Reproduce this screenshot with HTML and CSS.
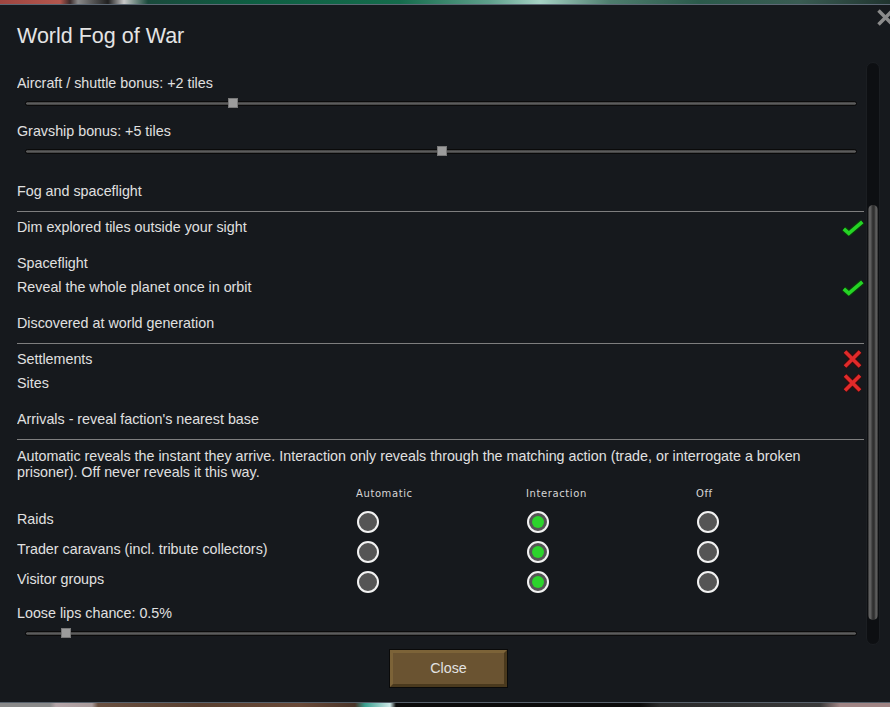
FILE: index.html
```html
<!DOCTYPE html>
<html lang="en">
<head>
<meta charset="utf-8">
<title>World Fog of War</title>
<link rel="stylesheet" href="styles.css">
</head>
<body>
<div class="bg-top"></div>
<div class="window">
  <svg class="close-x" width="19" height="19" viewBox="0 0 19 19"><path d="M2.5 2.5 L16.5 16.5 M16.5 2.5 L2.5 16.5" stroke="#8b8b8b" stroke-width="3.5" fill="none"/></svg>
  <h1 class="title">World Fog of War</h1>
  <div class="main">
    <div class="content">
      <div class="label">Aircraft / shuttle bonus: +2 tiles</div>
      <div class="slider"><div class="track"><div class="thumb" style="left:24.3%"></div></div></div>
      <div class="label">Gravship bonus: +5 tiles</div>
      <div class="slider"><div class="track"><div class="thumb" style="left:49.5%"></div></div></div>

      <div class="label section">Fog and spaceflight</div>
      <div class="sep"></div>
      <div class="row"><span>Dim explored tiles outside your sight</span>
        <svg class="check" width="22" height="18" viewBox="0 0 22 18"><path d="M1.8 10.8 L6.8 15.3 L20.3 3.8" stroke="#0b3a0b" stroke-width="6" fill="none"/><path d="M1.8 10.8 L6.8 15.3 L20.3 3.8" stroke="#25d425" stroke-width="3.6" fill="none"/></svg>
      </div>
      <div class="label section">Spaceflight</div>
      <div class="row"><span>Reveal the whole planet once in orbit</span>
        <svg class="check" width="22" height="18" viewBox="0 0 22 18"><path d="M1.8 10.8 L6.8 15.3 L20.3 3.8" stroke="#0b3a0b" stroke-width="6" fill="none"/><path d="M1.8 10.8 L6.8 15.3 L20.3 3.8" stroke="#25d425" stroke-width="3.6" fill="none"/></svg>
      </div>

      <div class="label section">Discovered at world generation</div>
      <div class="sep"></div>
      <div class="row"><span>Settlements</span>
        <svg class="cross" width="21" height="20" viewBox="0 0 21 20"><path d="M3 2.5 L18 17.5 M18 2.5 L3 17.5" stroke="#3a0c0c" stroke-width="5.5" fill="none"/><path d="M3 2.5 L18 17.5 M18 2.5 L3 17.5" stroke="#e12a2a" stroke-width="3.6" fill="none"/></svg>
      </div>
      <div class="row"><span>Sites</span>
        <svg class="cross" width="21" height="20" viewBox="0 0 21 20"><path d="M3 2.5 L18 17.5 M18 2.5 L3 17.5" stroke="#3a0c0c" stroke-width="5.5" fill="none"/><path d="M3 2.5 L18 17.5 M18 2.5 L3 17.5" stroke="#e12a2a" stroke-width="3.6" fill="none"/></svg>
      </div>

      <div class="label section">Arrivals - reveal faction's nearest base</div>
      <div class="sep"></div>
      <p class="para">Automatic reveals the instant they arrive. Interaction only reveals through the matching action (trade, or interrogate a broken prisoner). Off never reveals it this way.</p>

      <div class="grid">
        <div></div>
        <div class="colhead">Automatic</div>
        <div class="colhead">Interaction</div>
        <div class="colhead">Off</div>

        <div class="glabel">Raids</div>
        <div class="gcell"><span class="radio"></span></div>
        <div class="gcell"><span class="radio on"></span></div>
        <div class="gcell"><span class="radio"></span></div>

        <div class="glabel">Trader caravans (incl. tribute collectors)</div>
        <div class="gcell"><span class="radio"></span></div>
        <div class="gcell"><span class="radio on"></span></div>
        <div class="gcell"><span class="radio"></span></div>

        <div class="glabel">Visitor groups</div>
        <div class="gcell"><span class="radio"></span></div>
        <div class="gcell"><span class="radio on"></span></div>
        <div class="gcell"><span class="radio"></span></div>
      </div>

      <div class="label loose">Loose lips chance: 0.5%</div>
      <div class="slider"><div class="track"><div class="thumb" style="left:4.2%"></div></div></div>
    </div>
    <div class="scrollbar"><div class="sthumb"></div></div>
  </div>
  <div class="footer">
    <div class="btn"><div class="btn-face">Close</div></div>
  </div>
</div>
<div class="bg-bottom"></div>
</body>
</html>
```

FILE: styles.css
```css
* { box-sizing: border-box; }
html, body { margin: 0; padding: 0; }
body {
  width: 890px;
  height: 707px;
  overflow: hidden;
  background: #16191d;
  font-family: "Liberation Sans", Arial, sans-serif;
  color: #e0e0e0;
}
.bg-top {
  height: 4px;
  background: linear-gradient(90deg, #9e4540 0, #b4574e 60px, #3a2a2a 70px, #8a8a8a 78px, #202020 108px, #c8c8c8 124px, #1a4a3c 148px, #0e5e42 250px, #156c4c 400px, #5fa08c 490px, #a6d2c4 540px, #4e7d6e 610px, #2b5a4b 700px, #3a5c53 800px, #20342f 890px);
}
.bg-bottom {
  height: 4px;
  background: linear-gradient(90deg, #8a8a8a 0, #8a8a8a 50px, #b4a4a8 56px, #a89a9a 92px, #6a5040 98px, #5a4030 200px, #6a4a38 300px, #4a3428 355px, #3aa090 365px, #cfe8e8 390px, #0b0b0b 396px, #0b0b0b 640px, #2a2a2a 660px, #3a3a3a 820px, #a08484 840px, #a08484 890px);
}
.window {
  position: relative;
  height: 699px;
  border-top: 1px solid #5d6875;
  border-bottom: 1px solid #56606b;
  padding-left: 17px;
  overflow: hidden;
  background: #16191d;
}
.close-x {
  position: absolute;
  left: 876px;
  top: 3px;
}
.title {
  margin: 0;
  padding-top: 19px;
  font-size: 21.5px;
  line-height: 24px;
  font-weight: normal;
  color: #e4e4e4;
}
.main {
  display: flex;
  margin-top: 14px;
  height: 583px;
}
.content {
  width: 847px;
  height: 583px;
  overflow: hidden;
  padding-top: 9px;
  font-size: 14.3px;
}
.label {
  height: 24px;
  line-height: 24px;
}
.section { margin-top: 12px; }
.loose { margin-top: 4px; }
.slider {
  height: 24px;
  padding: 6px 7px 0 8px;
}
.track {
  position: relative;
  height: 5px;
  border: 1px solid #0a0a0a;
  border-radius: 3px;
  background: linear-gradient(#3c3c3c, #5c5c5c 50%, #3a3a3a);
}
.thumb {
  position: absolute;
  top: -4px;
  width: 10px;
  height: 10px;
  background: #9c9c9c;
  border: 1px solid #787878;
}
.sep {
  height: 1px;
  background: #7e7e7e;
  margin-top: 8px;
  margin-bottom: 3px;
}
.row {
  display: flex;
  align-items: center;
  justify-content: space-between;
  height: 24px;
  line-height: 24px;
}
.check, .cross { display: block; }
.cross { margin-right: 1px; }
.para {
  margin: 8px 0 0;
  max-width: 830px;
  line-height: 16px;
}
.grid {
  display: grid;
  grid-template-columns: 340px 170px 170px 1fr;
  grid-template-rows: 27px 30px 30px 30px;
}
.colhead {
  font-family: "DejaVu Sans", sans-serif;
  font-size: 10px;
  letter-spacing: 0.6px;
  line-height: 27px;
  color: #d6d6d6;
  margin-left: -1px;
}
.glabel {
  line-height: 24px;
}
.gcell {
  padding-top: 4px;
}
.radio {
  display: block;
  position: relative;
  width: 22px;
  height: 22px;
  border-radius: 50%;
  border: 2px solid #f2f2f2;
  background: #555555;
}
.radio.on::after {
  content: "";
  position: absolute;
  left: 3px;
  top: 3px;
  width: 12px;
  height: 12px;
  border-radius: 50%;
  background: #2bd42b;
}
.scrollbar {
  width: 14px;
  height: 583px;
  margin-left: 2px;
  border-radius: 7px;
  background: #0d0f12;
  border: 1px solid #1b1e22;
  padding: 142px 1px 0 1px;
}
.sthumb {
  height: 415px;
  border-radius: 5px;
  background: linear-gradient(90deg, #2a2a2a 0, #6a6a6a 18%, #505050 32%, #2c2c2c 50%, #3a3a3a 66%, #666666 82%, #2e2e2e 100%);
}
.footer {
  display: flex;
  justify-content: center;
  width: 863px;
  margin-top: 4px;
}
.btn {
  width: 119px;
  height: 39px;
  border: 1px solid #0a0a0a;
}
.btn-face {
  height: 100%;
  border-style: solid;
  border-width: 3px;
  border-color: #7c6338 #4a391d #4a391d #7c6338;
  background: #6a5331;
  color: #e2e2e2;
  font-size: 14.3px;
  line-height: 31px;
  text-align: center;
}
```
